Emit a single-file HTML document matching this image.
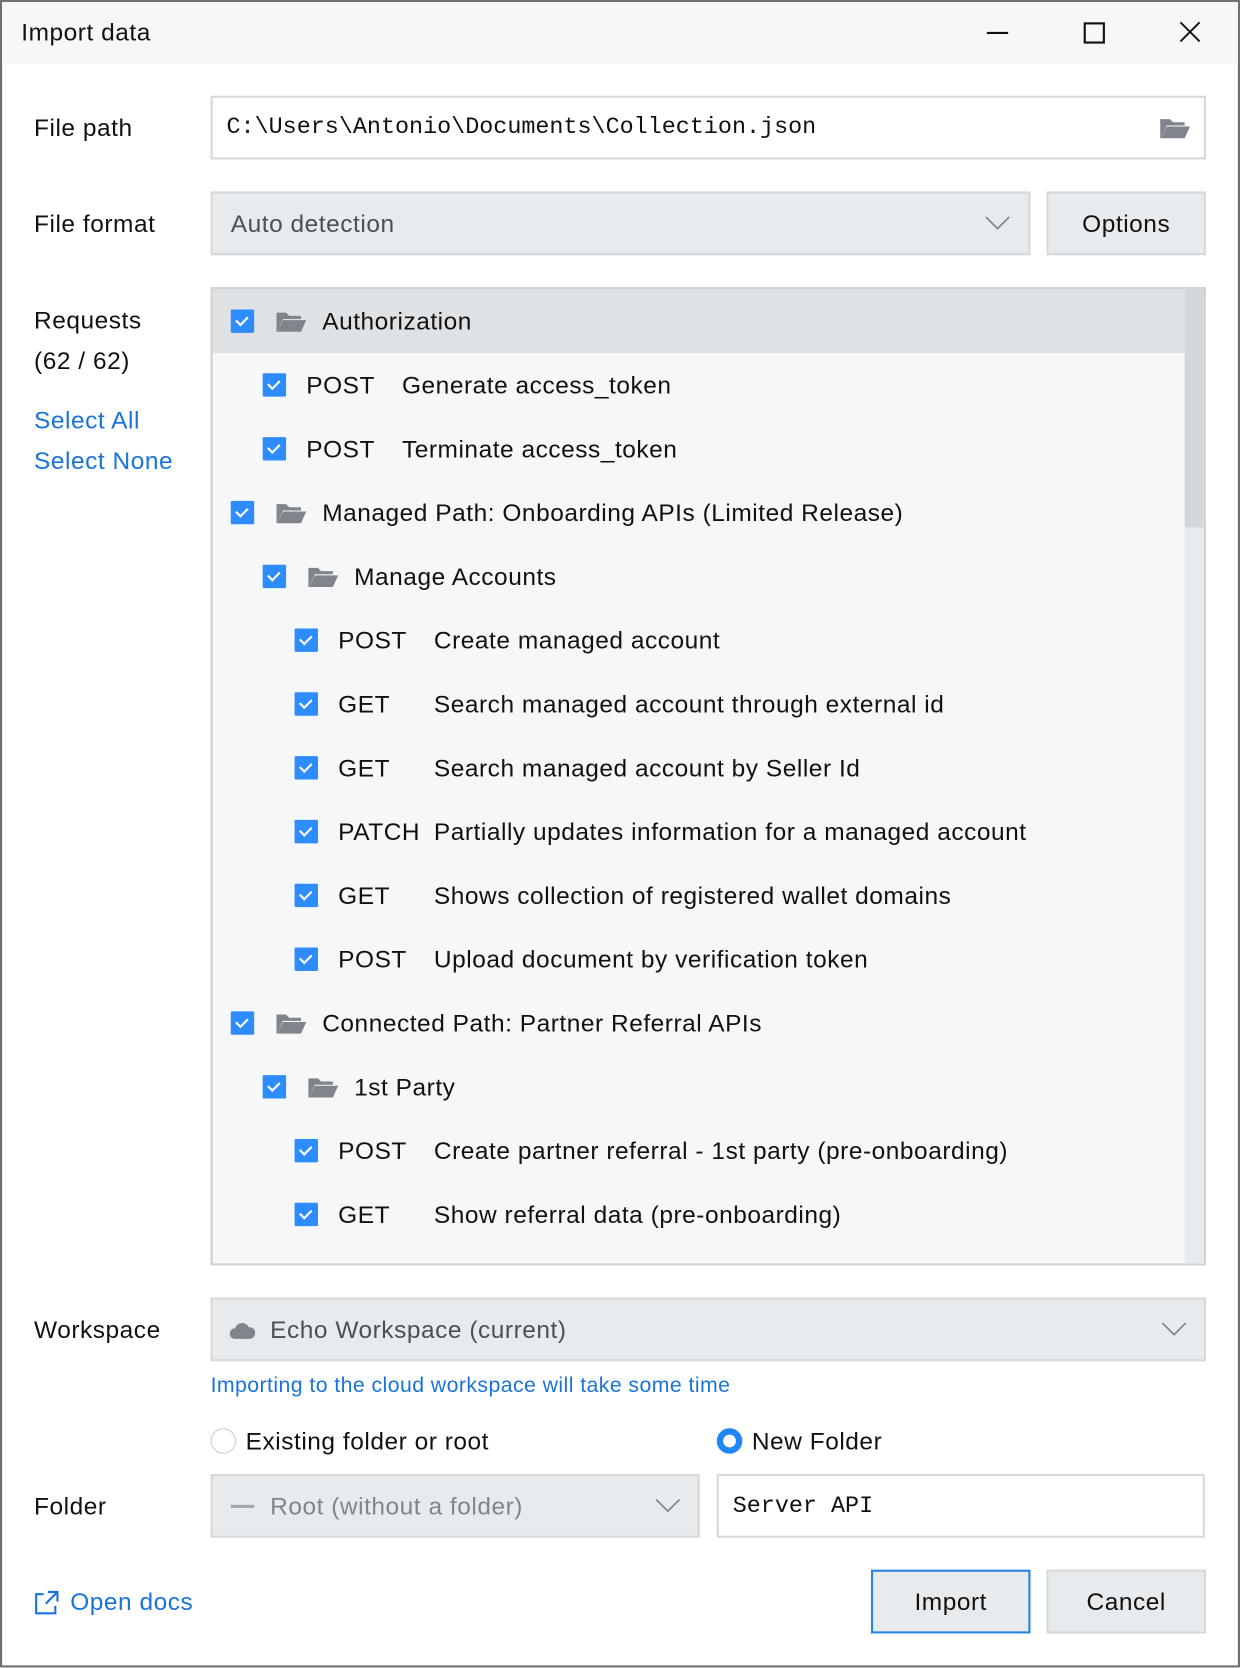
<!DOCTYPE html>
<html><head><meta charset="utf-8"><style>
html,body{margin:0;padding:0;background:#fff;}
body{width:1240px;height:1668px;overflow:hidden;position:relative;}
#w{position:absolute;left:0;top:0;width:1166px;height:1568px;transform:scale(1.06346);transform-origin:0 0;font-family:"Liberation Sans",sans-serif;color:#111;font-size:23px;letter-spacing:0.5px;}
.frame{position:absolute;left:0;top:0;width:1162px;height:1564px;border:2px solid #707070;}
.abs{position:absolute;}
.lbl{position:absolute;left:32px;line-height:26px;font-size:23px !important;}
.box{position:absolute;box-sizing:border-box;border:2px solid #d6d9dc;}
.cb{position:absolute;width:22px;height:22px;background:#2d8cff;border-radius:1px;}
.cb:after{content:"";position:absolute;left:7px;top:4px;width:5px;height:9px;border:solid #fff;border-width:0 2px 2px 0;transform:rotate(45deg);}
.row{position:absolute;left:0;width:914px;height:60px;line-height:60px;}
.t{position:absolute;top:0;white-space:nowrap;}
.fold{position:absolute;top:19px;line-height:0;}
.fold svg{display:block;}
.mono{font-family:'Liberation Mono',monospace;font-size:22px;letter-spacing:0;}
</style></head><body><div id="w">
<div class="frame"></div>
<div class="abs" style="left:2px;top:2px;width:1162px;height:58px;background:#f6f7f9"></div>
<div class="abs" style="left:20px;top:17px;font-size:23px">Import data</div>
<div class="abs" style="left:928px;top:30px;width:20px;height:2px;background:#111"></div>
<div class="abs" style="left:1019px;top:21px;width:16px;height:16px;border:2px solid #111"></div>
<svg class="abs" style="left:1108px;top:19px" width="22" height="22"><path d="M2 2L20 20M20 2L2 20" stroke="#111" stroke-width="1.8"/></svg>

<div class="lbl" style="top:107px">File path</div>
<div class="box" style="left:198px;top:90px;width:936px;height:60px;background:#fff"></div>
<div class="abs mono" style="left:213px;top:107px">C:\Users\Antonio\Documents\Collection.json</div>
<svg class="abs" style="left:1090px;top:109px" width="30" height="22"><path d="M1 3h9l3 3h11v3H7L2 21H1z" fill="#80858d"/><path d="M7 10h22l-5 11H2z" fill="#80858d"/></svg>

<div class="lbl" style="top:197px">File format</div>
<div class="box" style="left:198px;top:180px;width:771px;height:60px;background:#e8ebee"></div>
<div class="abs" style="left:217px;top:197px;color:#4a5058">Auto detection</div>
<svg class="abs" style="left:926px;top:203px" width="24" height="14"><path d="M1 1l11 11L23 1" fill="none" stroke="#80858d" stroke-width="1.6"/></svg>
<div class="box" style="left:984px;top:180px;width:150px;height:60px;background:#e8ebee"></div>
<div class="abs" style="left:984px;top:197px;width:150px;text-align:center">Options</div>

<div class="lbl" style="top:288px">Requests</div>
<div class="lbl" style="top:326px">(62 / 62)</div>
<div class="lbl" style="top:382px;color:#1a73d9">Select All</div>
<div class="lbl" style="top:420px;color:#1a73d9">Select None</div>

<div class="box" style="left:198px;top:270px;width:936px;height:920px;background:#f6f7f9;border-color:#cfd2d5;overflow:hidden">
<div class="abs" style="left:0;top:0;width:914px;height:60px;background:#dfe2e5"></div>
<div class="abs" style="left:914px;top:0;width:18px;height:916px;background:#e8ebee"></div>
<div class="abs" style="left:914px;top:0;width:18px;height:224px;background:#d4d7da"></div>
<div id="tree"></div>
</div>

<div class="lbl" style="top:1237px">Workspace</div>
<div class="box" style="left:198px;top:1220px;width:936px;height:60px;background:#e8ebee"></div>
<svg class="abs" style="left:216px;top:1240px" width="24" height="20"><path d="M5 19a5 5 0 0 1 0-10a7 7 0 0 1 13-1a5.5 5.5 0 0 1 1 11z" fill="#80858d"/></svg>
<div class="abs" style="left:254px;top:1237px;color:#4a5058">Echo Workspace (current)</div>
<svg class="abs" style="left:1092px;top:1243px" width="24" height="14"><path d="M1 1l11 11L23 1" fill="none" stroke="#80858d" stroke-width="1.6"/></svg>
<div class="abs" style="left:198px;top:1292px;font-size:20px;letter-spacing:0.4px;color:#1a73d9">Importing to the cloud workspace will take some time</div>

<div class="abs" style="left:198px;top:1343px;width:22px;height:22px;border:1.5px solid #c8cbce;border-radius:50%;background:#fff"></div>
<div class="abs" style="left:231px;top:1342px">Existing folder or root</div>
<div class="abs" style="left:674px;top:1343px;width:12px;height:12px;border:6px solid #1f87f5;border-radius:50%;background:#fff"></div>
<div class="abs" style="left:707px;top:1342px">New Folder</div>

<div class="lbl" style="top:1403px">Folder</div>
<div class="box" style="left:198px;top:1386px;width:460px;height:60px;background:#e8ebee"></div>
<div class="abs" style="left:217px;top:1415px;width:22px;height:3px;background:#a5a9ae"></div>
<div class="abs" style="left:254px;top:1403px;color:#80858d">Root (without a folder)</div>
<svg class="abs" style="left:616px;top:1409px" width="24" height="14"><path d="M1 1l11 11L23 1" fill="none" stroke="#80858d" stroke-width="1.6"/></svg>
<div class="box" style="left:674px;top:1386px;width:459px;height:60px;background:#fff"></div>
<div class="abs mono" style="left:689px;top:1404px">Server API</div>

<svg class="abs" style="left:32px;top:1495px" width="24" height="24"><path d="M9 4H2v18h18v-7" fill="none" stroke="#1a73d9" stroke-width="2"/><path d="M13 2h9v9M22 2L11 13" fill="none" stroke="#1a73d9" stroke-width="2"/></svg>
<div class="abs" style="left:66px;top:1493px;color:#1a73d9">Open docs</div>
<div class="box" style="left:819px;top:1476px;width:150px;height:60px;background:#e8ebee;border-color:#2a84e0"></div>
<div class="abs" style="left:819px;top:1493px;width:150px;text-align:center">Import</div>
<div class="box" style="left:984px;top:1476px;width:150px;height:60px;background:#e8ebee"></div>
<div class="abs" style="left:984px;top:1493px;width:150px;text-align:center">Cancel</div>
</div>
<script>
var rows=[[0,'f','','Authorization'],[1,'r','POST','Generate access_token'],[1,'r','POST','Terminate access_token'],[0,'f','','Managed Path: Onboarding APIs (Limited Release)'],[1,'f','','Manage Accounts'],[2,'r','POST','Create managed account'],[2,'r','GET','Search managed account through external id'],[2,'r','GET','Search managed account by Seller Id'],[2,'r','PATCH','Partially updates information for a managed account'],[2,'r','GET','Shows collection of registered wallet domains'],[2,'r','POST','Upload document by verification token'],[0,'f','','Connected Path: Partner Referral APIs'],[1,'f','','1st Party'],[2,'r','POST','Create partner referral - 1st party (pre-onboarding)'],[2,'r','GET','Show referral data (pre-onboarding)']];
var h='';
var fsvg='<svg width="30" height="22"><path d="M1 3h9l3 3h11v3H7L2 21H1z" fill="#80858d"/><path d="M7 10h22l-5 11H2z" fill="#80858d"/></svg>';
rows.forEach(function(r,i){var x=17+30*r[0];h+='<div class="row" style="top:'+(i*60)+'px"><div class="cb" style="left:'+x+'px;top:19px"></div>';
if(r[1]=='f'){h+='<div class="fold" style="left:'+(x+42)+'px">'+fsvg+'</div><div class="t" style="left:'+(x+86)+'px">'+r[3]+'</div>';}
else{h+='<div class="t" style="left:'+(x+41)+'px">'+r[2]+'</div><div class="t" style="left:'+(x+131)+'px">'+r[3]+'</div>';}
h+='</div>';});
document.getElementById('tree').innerHTML=h;
</script>
</body></html>
